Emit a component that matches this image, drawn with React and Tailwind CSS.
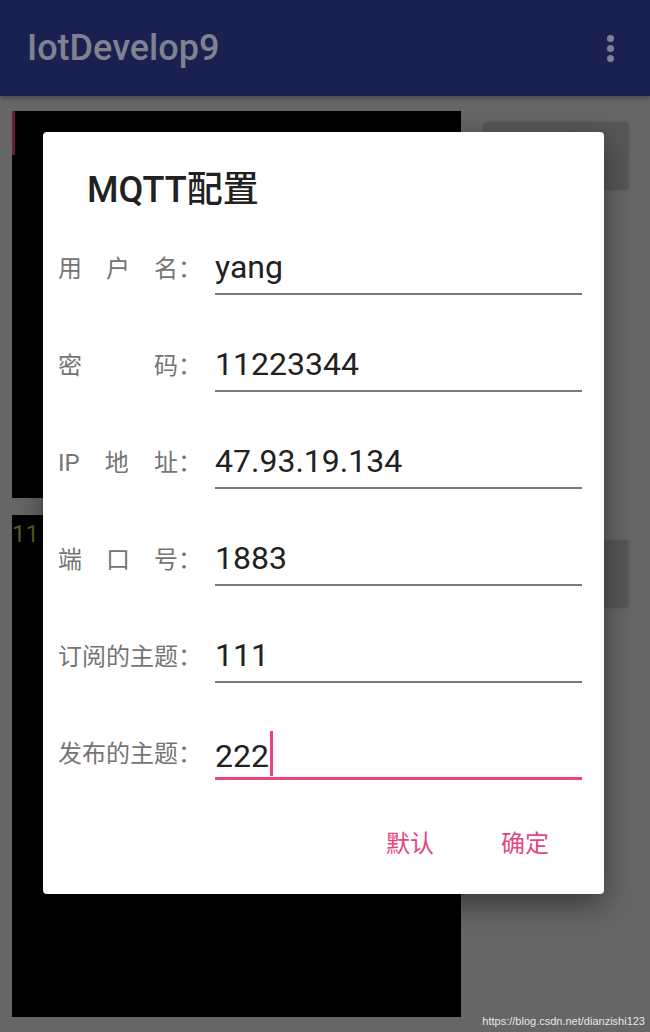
import React from 'react';

const FIELDS = [
  { label: ['用', '户', '名：'], value: 'yang' },
  { label: ['密', '码：'], value: '11223344' },
  { label: ['IP', '地', '址：'], value: '47.93.19.134' },
  { label: ['端', '口', '号：'], value: '1883' },
  { label: ['订阅的主题：'], value: '111' },
  { label: ['发布的主题：'], value: '222', focused: true },
];

function Field({ label, value, focused }) {
  return (
    <div className="flex items-center h-[52px]">
      <div className="flex justify-between w-[144px] text-[24px] leading-[30px] text-[#757575]">
        {label.map((part, i) => (
          <span key={i}>{part}</span>
        ))}
      </div>
      <div
        className={
          'ml-[13px] flex-1 h-[52px] pt-[5px] ' +
          (focused ? 'border-b-[3px] border-[#ec4380] pb-[6px]' : 'border-b-2 border-[#7a7a7a] pb-[7px]')
        }
      >
        <div className="flex items-center text-[32px] leading-[38px] text-[#212121]">
          <span>{value}</span>
          {focused && <span className="relative -top-[2px] ml-[1px] w-[3px] h-[45px] bg-[#ec4380]" />}
        </div>
      </div>
    </div>
  );
}

export default function App() {
  return (
    <div className="relative w-[650px] h-[1032px] overflow-hidden bg-[#666666] font-[Roboto,'Noto_Sans_CJK_SC',sans-serif]">
      {/* toolbar */}
      <div className="h-[96px] bg-[#1a2050] flex items-center justify-between pl-[27px] pr-[36px] shadow-[0_2px_4px_rgba(0,0,0,0.3)] relative z-10">
        <span className="text-[36px] font-medium text-[#7f8291] leading-none">IotDevelop9</span>
        <div className="flex flex-col gap-[3px]">
          <span className="w-[7px] h-[7px] rounded-full bg-[#7f8291]" />
          <span className="w-[7px] h-[7px] rounded-full bg-[#7f8291]" />
          <span className="w-[7px] h-[7px] rounded-full bg-[#7f8291]" />
        </div>
      </div>

      {/* screen behind the dialog */}
      <div className="pl-[12px] pt-[15px] flex flex-col gap-[17px]">
        <div className="flex">
          <div className="w-[449px] h-[387px] bg-black">
            <div className="w-[3px] h-[44px] bg-[#6e1e3c]" />
          </div>
          <div className="ml-[23px] mt-[11px] w-[144px] h-[66px] bg-[#575757] rounded-[2px] shadow-[0_1px_3px_rgba(0,0,0,0.3)]" />
        </div>
        <div className="flex">
          <div className="w-[449px] h-[502px] bg-black pt-[4px]">
            <span className="text-[24px] leading-[30px] text-[#56601c]">11</span>
          </div>
          <div className="ml-[23px] mt-[25px] w-[144px] h-[66px] bg-[#575757] rounded-[2px] shadow-[0_1px_3px_rgba(0,0,0,0.3)]" />
        </div>
      </div>

      {/* dialog */}
      <div className="absolute left-[43px] top-[132px] w-[561px] h-[762px] bg-white rounded-[4px] shadow-[0_10px_30px_rgba(0,0,0,0.45)] pt-[37px]">
        <div className="pl-[44px] text-[36px] leading-[42px] font-medium text-[#212121]">MQTT配置</div>
        <div className="mt-[32px] pl-[15px] pr-[22px] flex flex-col gap-[45px]">
          {FIELDS.map((f, i) => (
            <Field key={i} {...f} />
          ))}
        </div>
        <div className="mt-[48px] flex justify-end gap-[67px] pr-[55px] text-[24px] leading-[32px] text-[#e4457f]">
          <span>默认</span>
          <span>确定</span>
        </div>
      </div>

      <div className="absolute right-[5px] bottom-[5px] text-[11px] leading-none text-[#e6e6e6] font-['Liberation_Sans',sans-serif]">
        https://blog.csdn.net/dianzishi123
      </div>
    </div>
  );
}
